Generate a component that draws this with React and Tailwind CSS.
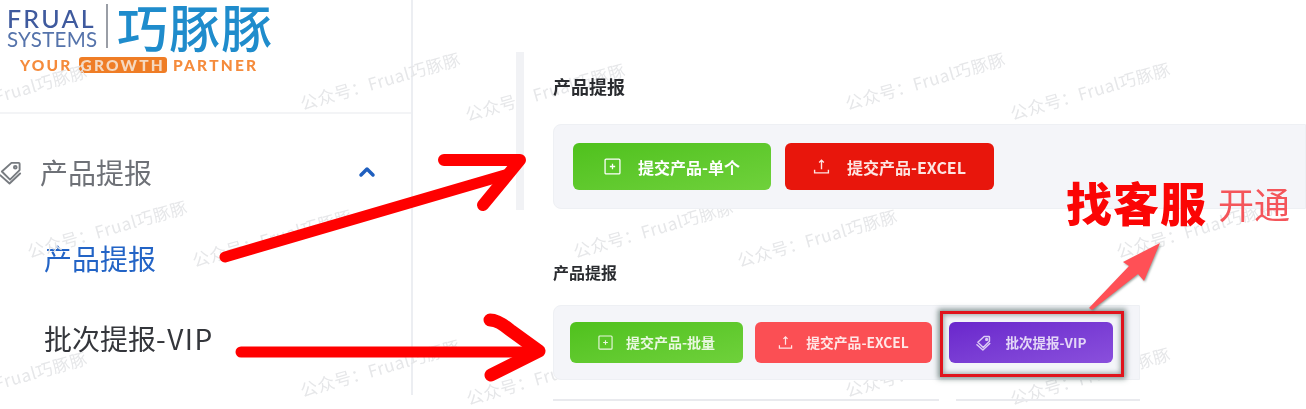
import React from "react";
import { ChevronUp } from "lucide-react";

const cjk = "font-['Noto_Sans_CJK_SC','Noto_Sans',sans-serif]";

const marks = [
  { t: "Frual巧豚豚", c: "left-[-2px] top-[84px]" },
  { t: "公众号：Frual巧豚豚", c: "left-[304px] top-[91px]" },
  { t: "公众号：Frual巧豚豚", c: "left-[469px] top-[102px]" },
  { t: "公众号：Frual巧豚豚", c: "left-[849px] top-[91px]" },
  { t: "公众号：Frual巧豚豚", c: "left-[1014px] top-[101px]" },
  { t: "公众号：Frual巧豚豚", c: "left-[31px] top-[239px]" },
  { t: "公众号：Frual巧豚豚", c: "left-[196px] top-[248px]" },
  { t: "公众号：Frual巧豚豚", c: "left-[577px] top-[239px]" },
  { t: "公众号：Frual巧豚豚", c: "left-[741px] top-[248px]" },
  { t: "公众号：Frual巧豚豚", c: "left-[1120px] top-[239px]" },
  { t: "Frual巧豚豚", c: "left-[-2px] top-[371px]" },
  { t: "公众号：Frual巧豚豚", c: "left-[304px] top-[378px]" },
  { t: "公众号：Frual巧豚豚", c: "left-[849px] top-[378px]" },
  { t: "公众号：Frual巧豚豚", c: "left-[1014px] top-[386px]" },
  { t: "公众号：Frual巧豚豚", c: "left-[470px] top-[386px]" },
];

function UploadTray({ className }) {
  return (
    <svg viewBox="0 0 16 16" fill="none" stroke="currentColor" strokeWidth="1.3" className={className}>
      <path d="M8 2v8.5M5.8 4.2 8 2l2.2 2.2M1.5 11v3h13v-3" />
    </svg>
  );
}

function PlusBox({ className }) {
  return (
    <svg viewBox="0 0 16 16" fill="none" stroke="currentColor" strokeWidth="1.2" className={className}>
      <rect x="1" y="1" width="14" height="14" rx="1" />
      <path d="M8 5.5v5M5.5 8h5" />
    </svg>
  );
}

function TagPair({ className, width = 2 }) {
  return (
    <svg viewBox="0 0 24 24" fill="none" stroke="currentColor" strokeWidth={width} strokeLinejoin="round" strokeLinecap="round" className={className}>
      <path d="M13 2.5h7.5a1 1 0 0 1 1 1V10L11.5 20 3 11.5Z" />
      <circle cx="17" cy="7" r="1.4" />
      <path d="M1.5 15.5 11 24l11-10.5" />
    </svg>
  );
}

function Btn({ icon, label, className }) {
  return (
    <div className={`flex items-center justify-center font-bold rounded-md ${className}`}>
      {icon}
      <span>{label}</span>
    </div>
  );
}

export default function App() {
  return (
    <div className={`relative flex w-[1306px] h-[409px] overflow-hidden bg-white blur-[0.5px] ${cjk}`}>
      <aside className="w-[413px] h-[395px] shrink-0 border-r-2 border-[#eceef2]">
        <div className="h-[114px] border-b-2 border-[#f3f4f6] pl-[7px] pt-[2px]">
          <div className="flex items-start">
            <div className="w-[92px] font-['Lato',sans-serif] leading-none">
              <div className="mt-[4px] text-[25px] font-medium tracking-[2.2px] text-[#3f5a9e]">FRUAL</div>
              <div className="mt-[-2px] text-[20.5px] tracking-[0.3px] text-[#5573ab] whitespace-nowrap">SYSTEMS</div>
            </div>
            <div className="ml-[7px] mt-[2px] w-[2px] h-[44px] bg-[#9a9ea6]" />
            <div className="ml-[9px] mt-[-6px] text-[51px] leading-[60px] tracking-[1px] font-medium text-[#1f8ccc]">巧豚豚</div>
          </div>
          <div className="ml-[13px] mt-[1px] flex items-center font-['Lato',sans-serif] font-black text-[15.5px] leading-[16px] tracking-[2.2px] text-[#f58b3c]">
            <span>YOUR</span>
            <span className="ml-[6px] px-[2px] rounded-[3px] bg-[#ef7d26] text-[#f5d9c0]">GROWTH</span>
            <span className="ml-[6px]">PARTNER</span>
          </div>
        </div>
        <div className="flex items-center h-[40px] mt-[38px] text-[#6e7177] text-[28px]">
          <TagPair className="w-[23px] h-[26px] ml-[-1px] text-[#777b80]" />
          <span className="ml-[18px]">产品提报</span>
          <ChevronUp className="ml-[203px] w-[24px] h-[24px] text-[#1f5fbf]" strokeWidth={3.5} />
        </div>
        <div className="mt-[46px] ml-[44px] h-[40px] leading-[40px] text-[28px] text-[#2364c6]">产品提报</div>
        <div className="mt-[40px] ml-[44px] h-[40px] leading-[40px] text-[28px] text-[#34363b]">
          批次提报<span className="tracking-[1.5px]">-VIP</span>
        </div>
      </aside>

      <main className="relative z-10 flex-1 min-w-0">
        <section className="ml-[103px] mt-[52px] h-[158px] border-l-[8px] border-[#f1f2f5] pl-[29px] pt-[22px]">
          <h2 className="h-[24px] leading-[24px] text-[18px] font-bold text-[#2a2c30]">产品提报</h2>
          <div className="mt-[26px] h-[85px] rounded-l-lg bg-[#f4f5f9] border border-[#eef0f4] flex items-center gap-[14px] pl-[19px]">
            <Btn
              className="w-[198px] h-[47px] text-[16px] text-white bg-gradient-to-br from-[#4fc11c] to-[#6fd13b] rounded-lg"
              label="提交产品-单个"
              icon={<PlusBox className="w-[17px] h-[17px] mr-[17px]" />}
            />
            <Btn
              className="w-[209px] h-[47px] text-[16px] text-[#fde5e2] bg-[#e8160c] rounded-lg"
              label="提交产品-EXCEL"
              icon={<UploadTray className="w-[17px] h-[17px] mr-[17px]" />}
            />
          </div>
        </section>
        <section className="ml-[140px] w-[753px] pt-[51px]">
          <h2 className="h-[22px] leading-[22px] text-[16px] font-bold text-[#2a2c30]">产品提报</h2>
          <div className="mt-[22px] w-[587px] h-[75px] rounded-l-lg bg-[#f4f5f9] border border-[#eef0f4] flex items-center pl-[16px]">
            <Btn
              className="w-[173px] h-[41px] text-[14px] text-[#e9f8e0] bg-gradient-to-br from-[#4fc11c] to-[#6fd13b]"
              label="提交产品-批量"
              icon={<PlusBox className="w-[15px] h-[15px] mr-[13px]" />}
            />
            <Btn
              className="ml-[12px] w-[177px] h-[41px] text-[13.8px] text-[#ffe6e6] bg-[#fb4f54]"
              label="提交产品-EXCEL"
              icon={<UploadTray className="w-[15px] h-[15px] mr-[13px]" />}
            />
            <Btn
              className="ml-[17px] w-[164px] h-[41px] text-[13.5px] text-[#e3d6f7] bg-gradient-to-br from-[#6a26cc] to-[#8a4fdc]"
              label="批次提报-VIP"
              icon={<TagPair className="w-[15px] h-[17px] mr-[15px] text-[#dccbf5]" width={2.4} />}
            />
          </div>
          <div className="mt-[19px] flex gap-[17px]">
            <div className="w-[386px] h-[2px] bg-[#e9eaee]" />
            <div className="w-[184px] h-[2px] bg-[#e9eaee]" />
          </div>
        </section>
      </main>

      {marks.map((m, i) => (
        <span
          key={i}
          className={`absolute ${m.c} origin-bottom-left -rotate-[16deg] whitespace-nowrap text-[17px] leading-[24px] tracking-[0.5px] text-[#e6e7e9] pointer-events-none`}
        >
          {m.t}
        </span>
      ))}

      <div className="absolute z-20 left-[940px] top-[311px] w-[184px] h-[66px] border-[3px] border-[#e0141c] shadow-[0_0_5px_2px_rgba(40,70,60,0.55),inset_0_0_5px_1px_rgba(40,70,60,0.45)]" />

      <div className="absolute z-20 left-[1066px] top-[168px] text-[46px] leading-[66px] font-black tracking-[1px] text-[#fb0505] whitespace-nowrap">找客服</div>
      <div className="absolute z-20 left-[1218px] top-[178px] text-[36px] leading-[50px] text-[#f4555a] whitespace-nowrap">开通</div>

      <svg className="absolute z-20 inset-0 w-[1306px] h-[409px] pointer-events-none" viewBox="0 0 1306 409">
        <g fill="none" stroke="#ff0000" strokeLinecap="round" strokeLinejoin="round">
          <path d="M225 257 L505 175" strokeWidth="11" />
          <path d="M444 160 H520 L483 205" strokeWidth="12" />
          <path d="M241 352 H530" strokeWidth="11" />
          <path d="M490 320 Q498 320 510 330 L539 351 L491 375" strokeWidth="13" />
        </g>
        <path
          d="M1160 243 L1144 281 L1138 274 L1092 310 L1089 308 L1129 266 L1123 262 Z"
          fill="#ff5056"
          style={{ filter: "drop-shadow(1px 1px 1px rgba(40,70,60,0.5))" }}
        />
      </svg>
    </div>
  );
}
